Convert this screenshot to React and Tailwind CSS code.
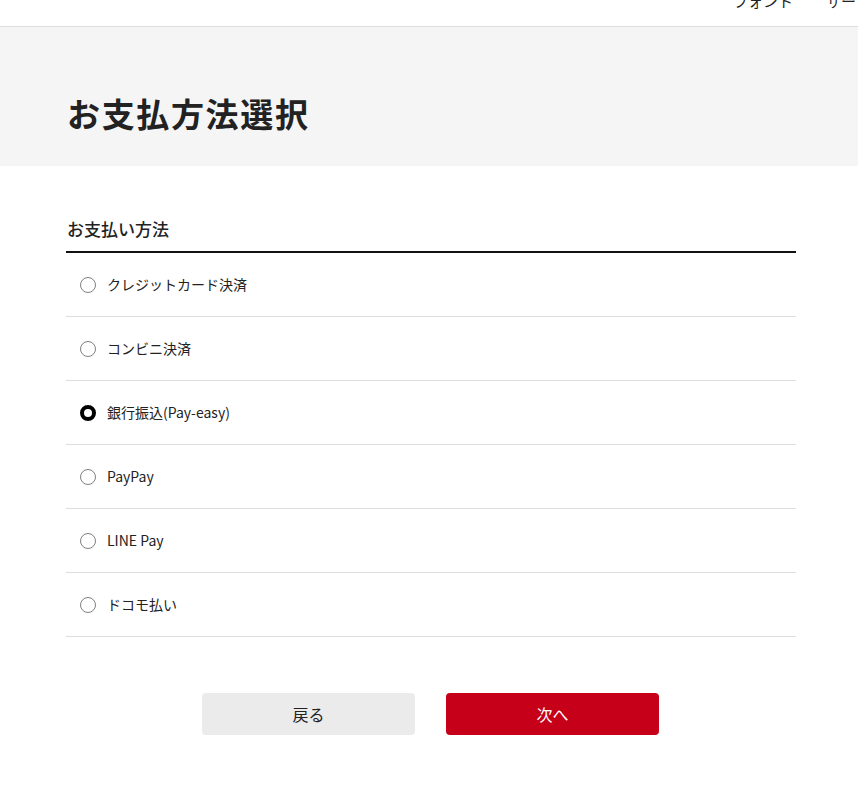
const METHODS = [
  "クレジットカード決済",
  "コンビニ決済",
  "銀行振込(Pay-easy)",
  "PayPay",
  "LINE Pay",
  "ドコモ払い",
];

function Radio({ checked }) {
  if (checked) {
    return <span className="w-4 h-4 rounded-full border-[4px] border-black bg-white shrink-0" />;
  }
  return <span className="w-4 h-4 rounded-full border-[1.5px] border-[#808080] bg-white shrink-0" />;
}

export default function App() {
  const selected = 2;
  return (
    <div className="min-h-screen bg-white text-[#222] font-['Noto_Sans_CJK_JP','Noto_Sans',sans-serif]">
      <header className="h-[27px] border-b border-[#ddd] overflow-hidden flex justify-end">
        <ul className="flex gap-[33px] -mt-[11px] text-[15px] leading-[24px] text-[#222]">
          <li>フォント</li>
          <li className="w-[32px] overflow-hidden whitespace-nowrap">サービス</li>
        </ul>
      </header>

      <div className="bg-[#f5f5f5] h-[139px] pt-[62px] px-[67px]">
        <h1 className="text-[33px] leading-[48px] font-bold tracking-[0.05em]">お支払方法選択</h1>
      </div>

      <main className="pl-[66px] pr-[62px] pt-[51px]">
        <h2 className="text-[17px] leading-[24px] font-medium pl-[1px] pb-[10px] border-b-2 border-[#111]">
          お支払い方法
        </h2>
        <ul>
          {METHODS.map((m, i) => (
            <li key={m} className="h-[64px] border-b border-[#ddd] flex items-center gap-[11px] pl-[14px] text-[14px]">
              <Radio checked={i === selected} />
              <span>{m}</span>
            </li>
          ))}
        </ul>
        <div className="flex justify-center gap-[31px] mt-[56px] pr-[1px]">
          <button className="w-[213px] h-[42px] rounded bg-[#ebebeb] text-[16px] text-[#222]">戻る</button>
          <button className="w-[213px] h-[42px] rounded bg-[#c50018] text-[16px] text-white">次へ</button>
        </div>
      </main>
    </div>
  );
}
